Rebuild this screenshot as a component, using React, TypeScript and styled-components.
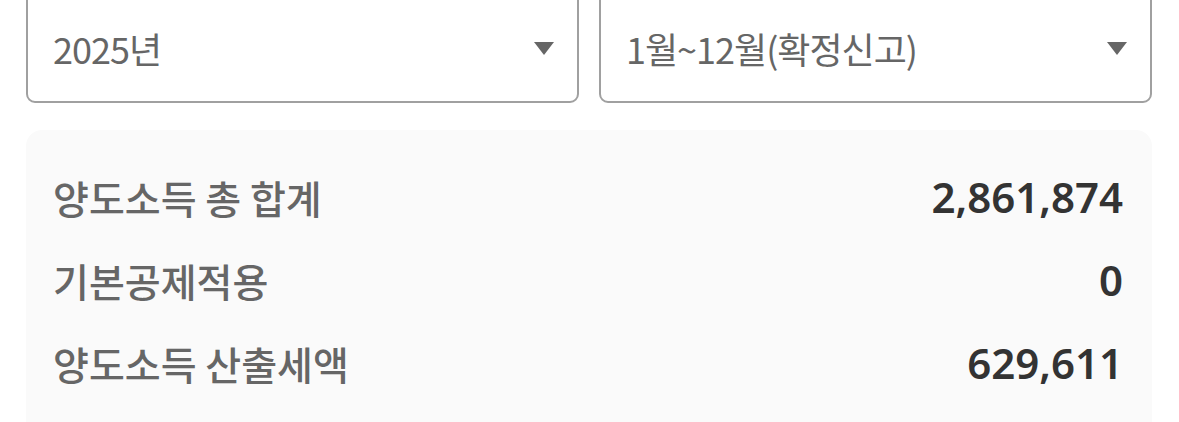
import React from "react";
import styled, { createGlobalStyle } from "styled-components";

const Global = createGlobalStyle`
  html, body { margin: 0; padding: 0; background: #ffffff; overflow: hidden; }
  * { box-sizing: border-box; }
`;

const Page = styled.div`
  width: 1179px;
  height: 422px;
  overflow: hidden;
  padding: 0 27px 0 26px;
  font-family: "Noto Sans CJK KR", "Noto Sans", sans-serif;
`;

const SelectRow = styled.div`
  display: grid;
  grid-template-columns: 1fr 1fr;
  gap: 20px;
  margin-top: -8px;
`;

const Select = styled.div`
  height: 111px;
  border: 2px solid #a0a0a0;
  border-radius: 9px;
  display: flex;
  align-items: center;
  justify-content: space-between;
  padding: 0 23px 0 25px;
  color: #666666;
  font-size: 36px;
  letter-spacing: -1px;
  font-weight: 400;
  background: #ffffff;
`;

const Caret = styled.span`
  width: 0;
  height: 0;
  border-left: 10px solid transparent;
  border-right: 10px solid transparent;
  border-top: 13px solid #666666;
  margin-top: 2px;
`;

const Panel = styled.div`
  margin-top: 27px;
  background: #fafafa;
  border-radius: 16px;
  padding: 25px 29px 60px 27px;
`;

const Row = styled.div`
  height: 83px;
  display: flex;
  align-items: center;
  justify-content: space-between;
`;

const Label = styled.span`
  color: #666666;
  font-size: 39px;
  font-weight: 500;
`;

const Value = styled.span`
  color: #333333;
  font-family: "Noto Sans", sans-serif;
  font-size: 42px;
  font-weight: 600;
`;

const rows = [
  { label: "양도소득 총 합계", value: "2,861,874" },
  { label: "기본공제적용", value: "0" },
  { label: "양도소득 산출세액", value: "629,611" },
];

export default function App() {
  return (
    <Page>
      <Global />
      <SelectRow>
        <Select>
          <span>2025년</span>
          <Caret />
        </Select>
        <Select>
          <span>1월~12월(확정신고)</span>
          <Caret />
        </Select>
      </SelectRow>
      <Panel>
        {rows.map((r) => (
          <Row key={r.label}>
            <Label>{r.label}</Label>
            <Value>{r.value}</Value>
          </Row>
        ))}
      </Panel>
    </Page>
  );
}
